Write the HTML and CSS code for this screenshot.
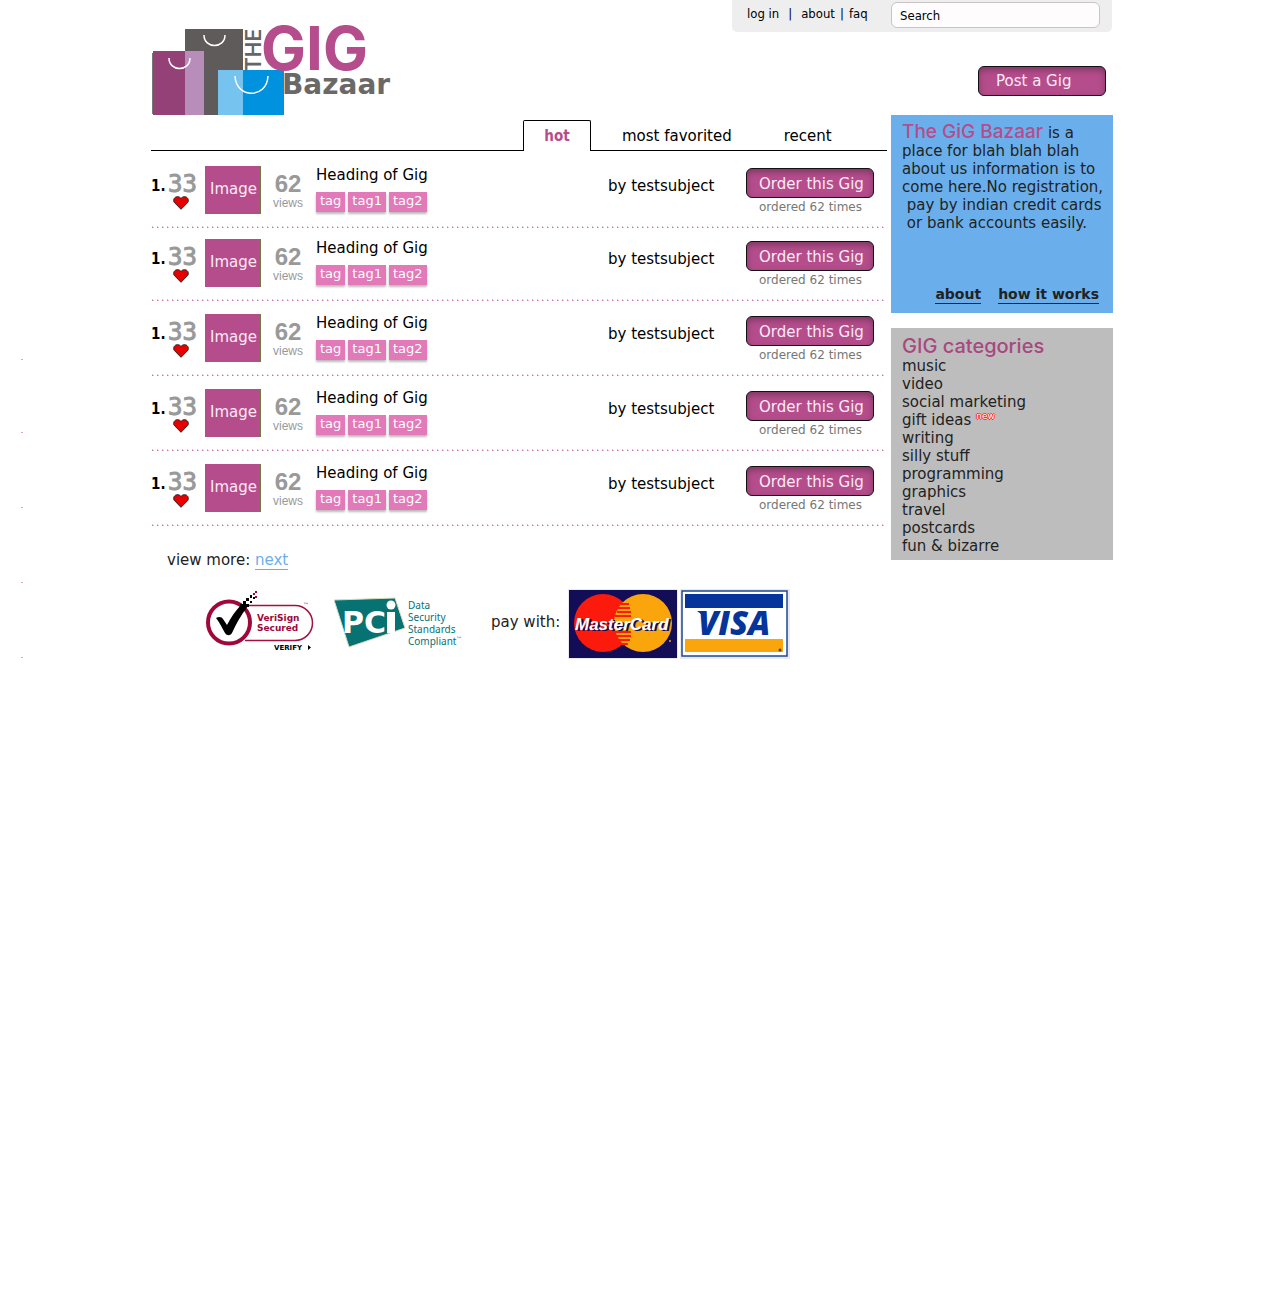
FILE: index.html
```html
<!DOCTYPE html>
<html lang="en">
<head>
<meta charset="utf-8">
<meta name="viewport" content="width=device-width, initial-scale=1">
<title>The GIG Bazaar</title>
<link rel="stylesheet" href="styles.css">
</head>
<body>
<svg width="0" height="0" class="defs" aria-hidden="true">
  <symbol id="heart" viewBox="0 0 16 14"><path d="M8 13.300 1.200 6.300C-.3 4 1.500.7 4.300.7 6 .7 7.300 1.300 8 2.500 8.700 1.300 10 .7 11.700.7c2.800 0 4.600 3.300 3.100 5.600z" fill="#e80000" stroke="#222" stroke-width="1"/></symbol>
</svg>
<div class="page">
  <header class="header">
    <a class="logo" href="#" aria-label="The GIG Bazaar">
      <svg width="241" height="90" viewBox="0 0 241 90">
        <rect x="34" y="4" width="58" height="86" fill="#5f5b5a"/>
        <rect x="2" y="26" width="51" height="64" fill="#934176"/>
        <rect x="34" y="26" width="19" height="64" fill="#b98dba"/>
        <rect x="67" y="45" width="66" height="45" fill="#0092df"/>
        <rect x="67" y="45" width="25" height="45" fill="#76c3f0"/>
        <path d="M1.500 28v61" stroke="#777"/>
        <g fill="none" stroke="#fff" stroke-width="1.500">
          <path d="M53 10c0 14 21 14 21 0"/>
          <path d="M18 33c0 14 21 14 21 0"/>
          <path d="M84 51c1 23 32 23 33 0"/>
        </g>
        <text class="logo-gig" x="110" y="45">GIG</text>
        <text class="logo-the" transform="translate(110 46) rotate(-90)">THE</text>
        <text class="logo-bazaar" x="131" y="69">Bazaar</text>
      </svg>
    </a>
    <div class="account">
      <div class="topbar">
        <nav class="toplinks"><a href="#">log in</a><span class="bar">|</span><a href="#">about</a><span class="thin">|</span><a href="#">faq</a></nav>
        <input class="search" type="search" placeholder="Search" aria-label="Search">
      </div>
      <button class="button post" type="button">Post a Gig</button>
    </div>
  </header>

  <div class="columns">
    <main class="main">
      <nav class="tabs"><a class="tab active" href="#">hot</a><a class="tab favorited" href="#">most favorited</a><a class="tab recent" href="#">recent</a></nav>
      <ol class="gigs">
        <li class="gig">
          <span class="rank">1.</span>
          <span class="likes">33<svg width="16" height="14"><use href="#heart"/></svg></span>
          <span class="thumb">Image</span>
          <span class="views"><b>62</b>views</span>
          <div class="info"><a class="title" href="#">Heading of Gig</a><div class="tags"><a href="#">tag</a><a href="#">tag1</a><a href="#">tag2</a></div></div>
          <span class="author">by testsubject</span>
          <div class="order"><button class="button" type="button">Order this Gig</button><span>ordered 62 times</span></div>
        </li>
        <li class="gig tight">
          <span class="rank">1.</span>
          <span class="likes">33<svg width="16" height="14"><use href="#heart"/></svg></span>
          <span class="thumb">Image</span>
          <span class="views"><b>62</b>views</span>
          <div class="info"><a class="title" href="#">Heading of Gig</a><div class="tags"><a href="#">tag</a><a href="#">tag1</a><a href="#">tag2</a></div></div>
          <span class="author">by testsubject</span>
          <div class="order"><button class="button" type="button">Order this Gig</button><span>ordered 62 times</span></div>
        </li>
        <li class="gig">
          <span class="rank">1.</span>
          <span class="likes">33<svg width="16" height="14"><use href="#heart"/></svg></span>
          <span class="thumb">Image</span>
          <span class="views"><b>62</b>views</span>
          <div class="info"><a class="title" href="#">Heading of Gig</a><div class="tags"><a href="#">tag</a><a href="#">tag1</a><a href="#">tag2</a></div></div>
          <span class="author">by testsubject</span>
          <div class="order"><button class="button" type="button">Order this Gig</button><span>ordered 62 times</span></div>
        </li>
        <li class="gig">
          <span class="rank">1.</span>
          <span class="likes">33<svg width="16" height="14"><use href="#heart"/></svg></span>
          <span class="thumb">Image</span>
          <span class="views"><b>62</b>views</span>
          <div class="info"><a class="title" href="#">Heading of Gig</a><div class="tags"><a href="#">tag</a><a href="#">tag1</a><a href="#">tag2</a></div></div>
          <span class="author">by testsubject</span>
          <div class="order"><button class="button" type="button">Order this Gig</button><span>ordered 62 times</span></div>
        </li>
        <li class="gig">
          <span class="rank">1.</span>
          <span class="likes">33<svg width="16" height="14"><use href="#heart"/></svg></span>
          <span class="thumb">Image</span>
          <span class="views"><b>62</b>views</span>
          <div class="info"><a class="title" href="#">Heading of Gig</a><div class="tags"><a href="#">tag</a><a href="#">tag1</a><a href="#">tag2</a></div></div>
          <span class="author">by testsubject</span>
          <div class="order"><button class="button" type="button">Order this Gig</button><span>ordered 62 times</span></div>
        </li>
      </ol>
      <p class="more">view more: <a href="#">next</a></p>
      <div class="badges">
        <svg class="verisign" width="110" height="68" viewBox="0 0 110 68" role="img" aria-label="VeriSign Secured">
          <path d="M40 15.500H90a17.500 17.500 0 0 1 0 35H40" fill="#fff" stroke="#a3123f" stroke-width="1.500"/>
          <circle cx="24" cy="32.500" r="21" fill="#fff" stroke="#a0083a" stroke-width="4"/>
          <path d="M11 28c3-2 6-1 7 1l4 6c4-8 9-15 15-21l6 2c-7 9-12 18-16 27-2 3-5 3-7 0-3-5-5-10-9-15z"/>
          <path d="M35 14h3v-3h3v3h3v3h-3v3h-3v-3h-3zM41 8h3v3h-3zM45 11h2v2h-2zM45 5h2v3h-2zM48 7h2v2h-2z"/>
          <path d="M48 3h2v2h-2zM50 6h2v2h-2zM50 1h2v2h-2z" fill="#a0083a"/>
          <text class="vs" x="52" y="31">VeriSign</text>
          <text class="vs" x="52" y="41">Secured</text>
          <text class="verify" x="69" y="60">VERIFY</text>
          <text class="trade vs-tm" x="98" y="17">™</text>
          <path d="M103 55v5l3-2.500z"/>
        </svg>
        <svg class="pci" width="130" height="68" viewBox="0 0 130 68" role="img" aria-label="PCI Data Security Standards Compliant">
          <path d="M0 10 61 8 71 38 15 57z" fill="#067372" stroke="#d8dcc0"/>
          <text class="pci-name" x="8" y="43">PC</text>
          <path d="M53 22h8v21h-8z" fill="#fff"/>
          <circle cx="57" cy="15" r="4.500" fill="#fff"/>
          <text class="pci-text" x="74" y="19">Data</text>
          <text class="pci-text" x="74" y="31">Security</text>
          <text class="pci-text" x="74" y="43">Standards</text>
          <text class="pci-text" x="74" y="55">Compliant</text>
          <text class="trade pci-tm" x="122" y="51">™</text>
        </svg>
        <span class="pay">pay with:</span>
        <svg class="mastercard" width="110" height="70" viewBox="0 0 110 70" role="img" aria-label="MasterCard">
          <rect width="110" height="70" fill="#e9e9ee"/>
          <rect x="1" y="1" width="108" height="68" fill="#130c56"/>
          <circle cx="35" cy="34" r="29" fill="#fb1a0b"/>
          <circle cx="75" cy="34" r="29" fill="#faa50c"/>
          <path d="M53 15h8M50 19h12M49 23h14M47 27h16M47 43h16M48 47h15M50 51h12M52 55h8" stroke="#fb1a0b" stroke-width="2"/>
          <text class="mc shade" x="9" y="42">MasterCard</text>
          <text class="mc" x="7" y="41">MasterCard</text>
          <circle cx="102" cy="52" r="1" fill="#faa50c"/>
        </svg>
        <svg class="visa" width="110" height="70" viewBox="0 0 110 70" role="img" aria-label="VISA">
          <rect width="110" height="70" fill="#e9e9ee"/>
          <rect x="2" y="2" width="105" height="65" fill="#fff" stroke="#1e4790" stroke-width="1.500"/>
          <rect x="5" y="5" width="98" height="14" fill="#05359a"/>
          <rect x="5" y="50" width="98" height="13" fill="#faa50c"/>
          <text class="visa-name" x="18" y="46">VISA</text>
          <path d="M17 22h9l-1 3h-4z" fill="#05359a"/>
          <circle cx="100" cy="61" r="1.500" fill="#554000"/>
        </svg>
      </div>
    </main>

    <aside class="sidebar">
      <section class="panel intro">
        <p><span class="brand">The GiG Bazaar</span> is a<br>place for blah blah blah<br>about us information is to<br>come here.No registration,<br>&nbsp;pay by indian credit cards<br>&nbsp;or bank accounts easily.</p>
        <nav class="intro-links"><a href="#">about</a><a href="#">how it works</a></nav>
      </section>
      <section class="panel categories">
        <h2 class="brand">GIG categories</h2>
        <ul>
          <li><a href="#">music</a></li>
          <li><a href="#">video</a></li>
          <li><a href="#">social marketing</a></li>
          <li><a href="#">gift ideas</a><span class="new">new</span></li>
          <li><a href="#">writing</a></li>
          <li><a href="#">silly stuff</a></li>
          <li><a href="#">programming</a></li>
          <li><a href="#">graphics</a></li>
          <li><a href="#">travel</a></li>
          <li><a href="#">postcards</a></li>
          <li><a href="#">fun &amp; bizarre</a></li>
        </ul>
      </section>
    </aside>
  </div>
</div>
</body>
</html>
```
FILE: styles.css
```css
* { box-sizing: border-box; }

body {
  min-height: 100vh;
  margin: 0;
  background: #fff;
  color: #000;
  font: 15px/18px Verdana, "DejaVu Sans", sans-serif;
}

a { color: inherit; text-decoration: none; }
svg { display: block; flex: none; }
.defs { position: absolute; }

.page {
  max-width: 963px;
  margin: 0 auto;
  padding-left: 1px;
}

/* Header */
.header {
  display: flex;
  justify-content: space-between;
  height: 115px;
}
.logo { align-self: flex-end; }
.logo svg { overflow: visible; }
.logo-gig { font: 700 60px Inter, sans-serif; fill: #b54d8c; }
.logo-the { font: 600 21px Inter, sans-serif; fill: #666; }
.logo-bazaar { font: 700 28px "DejaVu Sans", sans-serif; fill: #6b6968; }

.account {
  display: flex;
  flex-direction: column;
  align-items: flex-end;
  gap: 34px;
  padding-right: 1px;
}
.topbar {
  display: flex;
  justify-content: space-between;
  width: 380px;
  height: 32px;
  padding: 2px 12px 4px 15px;
  background: #eee;
  border-radius: 0 0 5px 5px;
}
.toplinks {
  font: 13px/24px Tahoma, "DejaVu Sans Condensed", "DejaVu Sans", sans-serif;
}
.bar { margin: 0 9px; }
.thin { margin: 0 5px; }
.search {
  width: 209px;
  height: 26px;
  padding: 0 8px;
  border: 1px solid #c8c4c6;
  border-radius: 6px;
  background: #fffcfd;
  font: 13px Tahoma, "DejaVu Sans Condensed", "DejaVu Sans", sans-serif;
  appearance: none;
}
.search::placeholder { color: #000; opacity: 1; }

.button {
  width: 128px;
  height: 30px;
  padding: 0 0 0 12px;
  border: 1px solid #151015;
  border-radius: 6px;
  background: #b54d8c;
  box-shadow: inset 0 3px 6px #7d3863;
  color: #fbeaf5;
  font: 15px/26px Verdana, "DejaVu Sans", sans-serif;
  text-align: left;
  white-space: nowrap;
}
.post { margin-right: 6px; padding-left: 17px; }

/* Columns */
.columns { display: flex; gap: 4px; align-items: flex-start; }
.main { flex: 1; min-width: 0; }
.sidebar { width: 222px; }

.tabs {
  display: flex;
  height: 36px;
  padding-top: 5px;
  padding-left: 372px;
  background: linear-gradient(#000, #000) bottom / 100% 1px no-repeat;
}
.tab { line-height: 32px; }
.active {
  width: 68px;
  border: 1px solid #000;
  border-bottom: 0;
  border-radius: 2px 2px 0 0;
  background: #fff;
  color: #b54d8c;
  font-family: Tahoma, "DejaVu Sans Condensed", sans-serif;
  font-weight: 700;
  line-height: 30px;
  text-align: center;
}
.favorited { margin-left: 31px; }
.recent { margin-left: 52px; }

.gigs { margin: 2px 0 0; padding: 0; list-style: none; }
.gig {
  position: relative;
  display: grid;
  grid-template-columns: 17px 37px 67px 44px 1fr 138px 128px;
  height: 75px;
  padding: 13px 13px 0 0;
  white-space: nowrap;
}
.tight { height: 73px; padding-top: 11px; }
.gig::before {
  content: "";
  position: absolute;
  left: -130px;
  bottom: -132px;
  width: 2px;
  height: 1px;
  background: #dda4c6;
}
.gig::after {
  content: "";
  position: absolute;
  inset: auto 2px 0 1px;
  height: 2px;
  background:
    repeating-linear-gradient(90deg, #c976a8 0 1px, #e6bcd4 1px 2px, #fff 2px 5px) bottom / 100% 1px no-repeat,
    repeating-linear-gradient(90deg, #e6bcd4 0 1px, #fff 1px 5px);
}
.rank {
  padding-top: 11px;
  font-family: "DejaVu Sans Condensed", sans-serif;
  font-weight: 700;
}
.likes {
  width: 29px;
  padding-top: 6px;
  color: #999;
  font: 24px/24px "DejaVu Sans Mono", monospace;
  -webkit-text-stroke: 1px #999;
}
.likes svg { margin-left: 5px; }
.thumb {
  width: 56px;
  height: 48px;
  padding-left: 5px;
  border-right: 1px solid #6d7b45;
  background: #b54d8c;
  color: #fbeaf5;
  line-height: 46px;
}
.views {
  width: 32px;
  padding-top: 6px;
  color: #999;
  font: 12px/14px "Liberation Sans", Arial, sans-serif;
  text-align: center;
}
.views b { display: block; font-size: 24px; line-height: 24px; }
.title { display: block; }
.tags { display: flex; gap: 3px; margin-top: 8px; }
.tags a {
  padding: 0 4px 2px;
  background: #e279b9;
  box-shadow: 0 2px 2px #bbb;
  color: #fff;
  font-size: 13px;
  line-height: 18px;
}
.author { padding-top: 11px; }
.order { padding-top: 2px; }
.order .button { padding-top: 2px; }
.order span {
  display: block;
  padding-left: 13px;
  color: #777;
  font-size: 12px;
}

.more { margin: 25px 0 0 16px; color: #222; }
.more a { color: #6aafeb; border-bottom: 1px solid; }

.badges { display: flex; align-items: center; margin: 20px 0 0 54px; height: 70px; color: #222; }
.pci { margin-left: 19px; }
.pay { margin-left: 27px; padding-bottom: 4px; width: 77px; white-space: nowrap; }
.visa { margin-left: 2px; }
.vs { font: 700 9px "DejaVu Sans", sans-serif; fill: #a0083a; }
.verify { font: 700 7px "DejaVu Sans", sans-serif; }
.trade { font: 6px "DejaVu Sans", sans-serif; }
.vs-tm { fill: #a0083a; }
.pci-tm { fill: #067372; }
.pci-name { font: 700 30px "DejaVu Sans", sans-serif; fill: #fff; }
.pci-text { font: 10px "Noto Sans", sans-serif; fill: #067372; }
.mc { font: italic 700 17px "Liberation Sans", Arial, sans-serif; fill: #fff; }
.shade { fill: #130c56; }
.visa-name { font: italic 800 33px "Open Sans", sans-serif; fill: #05359a; }

/* Sidebar */
.panel { padding: 8px 0 5px 11px; color: #222; white-space: nowrap; }
.intro {
  display: flex;
  flex-direction: column;
  justify-content: space-between;
  min-height: 198px;
  padding-bottom: 9px;
  background: #6aafeb;
}
.intro p { margin: 0; }
.brand { color: #b54d8c; font: 500 19px/18px Inter, sans-serif; }
.intro-links {
  display: flex;
  justify-content: flex-end;
  gap: 17px;
  padding-right: 14px;
  font-size: 14px;
  font-weight: 700;
}
.intro-links a { border-bottom: 1px solid #222; line-height: 17px; }
.categories { margin-top: 15px; background: #bdbdbd; }
.categories h2 { margin: 0; color: #a8487f; font-size: 20px; line-height: 21px; }
.categories ul { margin: 0; padding: 0; list-style: none; }
.new {
  margin-left: 5px;
  color: #fff;
  font-size: 9px;
  line-height: 9px;
  vertical-align: 6px;
  text-shadow: 1px 0 #f21, -1px 0 #f21, 0 1px #f21, 0 -1px #f21;
}
```
